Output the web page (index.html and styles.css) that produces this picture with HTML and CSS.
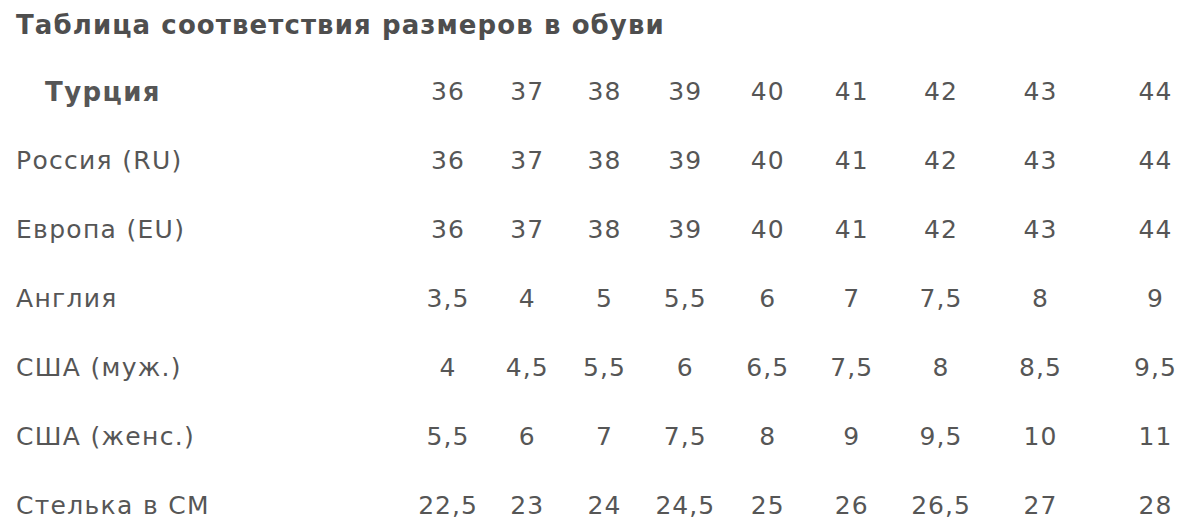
FILE: index.html
```html
<!DOCTYPE html>
<html lang="ru">
<head>
<meta charset="utf-8">
<title>Таблица соответствия размеров в обуви</title>
<link rel="stylesheet" href="styles.css">
</head>
<body>
<div class="page">
  <h1 class="title">Таблица соответствия размеров в обуви</h1>
  <div class="sizes">
    <div class="label label-head">Турция</div>
    <div class="cell">36</div><div class="cell">37</div><div class="cell">38</div><div class="cell">39</div><div class="cell">40</div><div class="cell">41</div><div class="cell">42</div><div class="cell">43</div><div class="cell last">44</div>

    <div class="label">Россия (RU)</div>
    <div class="cell">36</div><div class="cell">37</div><div class="cell">38</div><div class="cell">39</div><div class="cell">40</div><div class="cell">41</div><div class="cell">42</div><div class="cell">43</div><div class="cell last">44</div>

    <div class="label">Европа (EU)</div>
    <div class="cell">36</div><div class="cell">37</div><div class="cell">38</div><div class="cell">39</div><div class="cell">40</div><div class="cell">41</div><div class="cell">42</div><div class="cell">43</div><div class="cell last">44</div>

    <div class="label">Англия</div>
    <div class="cell">3,5</div><div class="cell">4</div><div class="cell">5</div><div class="cell">5,5</div><div class="cell">6</div><div class="cell">7</div><div class="cell">7,5</div><div class="cell">8</div><div class="cell last">9</div>

    <div class="label">США (муж.)</div>
    <div class="cell">4</div><div class="cell">4,5</div><div class="cell">5,5</div><div class="cell">6</div><div class="cell">6,5</div><div class="cell">7,5</div><div class="cell">8</div><div class="cell">8,5</div><div class="cell last">9,5</div>

    <div class="label">США (женс.)</div>
    <div class="cell">5,5</div><div class="cell">6</div><div class="cell">7</div><div class="cell">7,5</div><div class="cell">8</div><div class="cell">9</div><div class="cell">9,5</div><div class="cell">10</div><div class="cell last">11</div>

    <div class="label">Стелька в СМ</div>
    <div class="cell">22,5</div><div class="cell">23</div><div class="cell">24</div><div class="cell">24,5</div><div class="cell">25</div><div class="cell">26</div><div class="cell">26,5</div><div class="cell">27</div><div class="cell last">28</div>
  </div>
</div>
</body>
</html>
```

FILE: styles.css
```css
html, body {
  margin: 0;
  padding: 0;
  background: #ffffff;
}

.page {
  width: 1189px;
  height: 532px;
  overflow: hidden;
  font-family: "DejaVu Sans", Verdana, sans-serif;
  color: #565656;
}

.title {
  margin: 0 0 6px 0;
  padding: 0 0 0 16px;
  height: 51px;
  line-height: 51px;
  font-size: 26px;
  font-weight: bold;
  letter-spacing: 1.1px;
  color: #4e4e4e;
  white-space: nowrap;
}

.sizes {
  display: grid;
  grid-template-columns: 407px 82px 76.5px 78px 83.5px 81.5px 86.5px 92px 107px 95px;
  grid-auto-rows: 69px;
  align-items: center;
  font-size: 25px;
}

.label {
  padding-left: 16px;
  letter-spacing: 1.3px;
  white-space: nowrap;
}

.label-head {
  padding-left: 45px;
  font-size: 26px;
  letter-spacing: 1.4px;
  font-weight: bold;
}

.cell {
  text-align: center;
  letter-spacing: 1px;
  white-space: nowrap;
}

.cell.last {
  padding-left: 28px;
}
```
